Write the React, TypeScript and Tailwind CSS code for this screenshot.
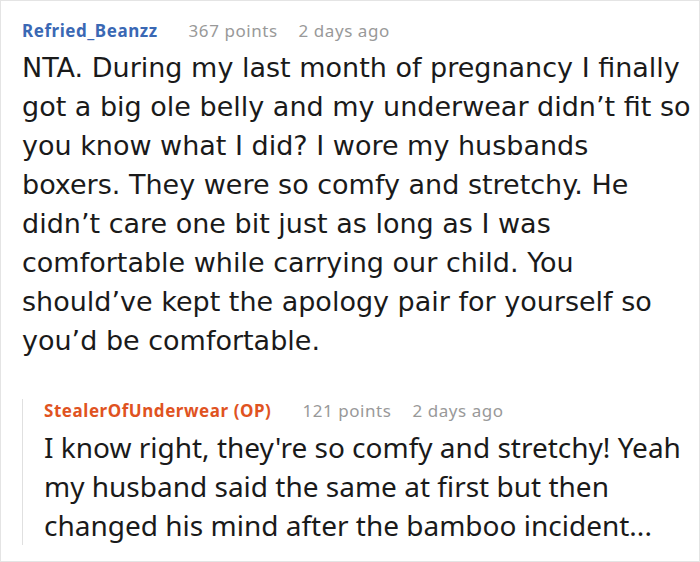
const font = { fontFamily: '"Noto Sans", "Open Sans", sans-serif' }

interface HeaderProps {
  name: string
  points: string
  time: string
  nameClass: string
}

const CommentHeader: React.FC<HeaderProps> = ({ name, points, time, nameClass }) => (
  <div className="flex items-center h-[24px] text-[17px] leading-[24px] tracking-[0.55px]">
    <span className={`font-bold ${nameClass}`}>{name}</span>
    <span className="ml-[31px] text-[#999999]">{points}</span>
    <span className="ml-[21px] text-[#999999]">{time}</span>
  </div>
)

export default function App() {
  return (
    <div
      className="w-[700px] h-[562px] bg-white border border-[#e4e4e4] overflow-hidden"
      style={font}
    >
      <div className="pl-[21px] pr-1 pt-[18px]">
        <CommentHeader
          name="Refried_Beanzz"
          points="367 points"
          time="2 days ago"
          nameClass="text-[#3a68b4]"
        />
        <p
          className="mt-[5px] text-[27px] leading-[39px] text-[#1a1a1a]"
          style={{ fontFamily: '"DejaVu Sans", "Noto Sans", sans-serif' }}
        >
          NTA. During my last month of pregnancy I finally got a big ole belly and my
          underwear didn’t fit so you know what I did? I wore my husbands boxers. They were so
          comfy and stretchy. He didn’t care one bit just as long as I was comfortable while
          carrying our child. You should’ve kept the apology pair for yourself so you’d be
          comfortable.
        </p>
        <div className="mt-[39px] border-l border-[#e0e0e0] pl-[21px]">
          <CommentHeader
            name="StealerOfUnderwear (OP)"
            points="121 points"
            time="2 days ago"
            nameClass="text-[#e0531f]"
          />
          <p className="mt-[5px] text-[28px] leading-[39px] text-[#1a1a1a]">
            I know right, they're so comfy and stretchy! Yeah my husband said the same at
            first but then changed his mind after the bamboo incident...
          </p>
        </div>
      </div>
    </div>
  )
}
